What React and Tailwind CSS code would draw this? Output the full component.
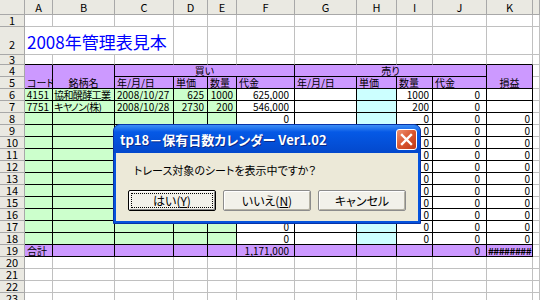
import { Fragment } from "react";

const COLS = ["A", "B", "C", "D", "E", "F", "G", "H", "I", "J", "K", ""];

const rows = [
  { a: "4151", b: "協和醗酵工業", c: "2008/10/27", d: "625", e: "1000", f: "625,000", i: "1000", j: "0", k: "" },
  { a: "7751", b: "キヤノン(株)", c: "2008/10/28", d: "2730", e: "200", f: "546,000", i: "200", j: "0", k: "" },
  ...Array.from({ length: 11 }, () => ({ a: "", b: "", c: "", d: "", e: "", f: "0", i: "0", j: "0", k: "0" })),
];

function Head({ children, className = "items-center" }) {
  return (
    <div className={"flex justify-center bg-[#eae9e2] border-r border-b border-[#a8a8a8] text-[11px] leading-none text-black " + className}>
      {children}
    </div>
  );
}

function Cell({ children, className = "" }) {
  return (
    <div className={"flex items-end whitespace-nowrap border-r border-b text-[10px] leading-[11px] text-black " + className}>
      {children}
    </div>
  );
}

function PlainRow({ n, tableTop }) {
  return (
    <>
      <Head>{n}</Head>
      {COLS.map((c, i) =>
        tableTop && i < 11 ? (
          <Cell key={i} className="border-r-[#c0c0c0] border-b-black" />
        ) : (
          <Cell key={i} className="border-[#c0c0c0]" />
        )
      )}
    </>
  );
}

function XpButton({ children, primary }) {
  if (primary) {
    return (
      <div className="w-[88px] h-[21px] border border-black bg-[#f2f1ea] rounded-[2px] p-[2px] shadow-[inset_1px_1px_0_#fff,inset_-1px_-1px_0_#8a8a8a]">
        <div className="h-full border border-dotted border-black flex items-center justify-center text-[12px] leading-none">
          {children}
        </div>
      </div>
    );
  }
  return (
    <div className="w-[88px] h-[21px] border border-[#8c8c8c] bg-[#f2f1ea] rounded-[2px] flex items-center justify-center text-[12px] leading-none shadow-[inset_1px_1px_0_#fff,inset_-1px_-1px_0_#b5b2a5]">
      {children}
    </div>
  );
}

export default function App() {
  return (
    <div className="relative w-[540px] h-[300px] overflow-hidden bg-white font-['Noto_Sans_CJK_JP',sans-serif] [font-feature-settings:'palt']">
      <div className="grid grid-cols-[25px_28px_62px_59px_34px_29px_58px_62px_40px_36px_54px_46px_7px] grid-rows-[15px_12px_28px_10px_repeat(20,12px)]">
        {/* column headers */}
        <Head />
        {COLS.map((c, i) => (
          <Head key={i}>{c}</Head>
        ))}

        <PlainRow n={1} />

        {/* row 2 with title */}
        <Head className="items-end pb-[4px]">2</Head>
        <Cell className="col-span-3 border-[#c0c0c0] pl-[2px] pb-[3px]">
          <span className="text-[17px] leading-[19px] text-[#0000ff]">2008年管理表見本</span>
        </Cell>
        {COLS.slice(3).map((c, i) => (
          <Cell key={i} className="border-[#c0c0c0]" />
        ))}

        <PlainRow n={3} tableTop />

        {/* row 4 */}
        <Head>4</Head>
        <Cell className="row-span-2 border-black bg-[#cc99ff] pl-[2px]">コード</Cell>
        <Cell className="row-span-2 border-black bg-[#cc99ff] justify-center">銘柄名</Cell>
        <Cell className="col-span-4 border-black bg-[#cc99ff] justify-center">買い</Cell>
        <Cell className="col-span-4 border-black bg-[#cc99ff] justify-center">売り</Cell>
        <Cell className="row-span-2 border-black bg-[#cc99ff] justify-center">損益</Cell>
        <Cell className="border-[#c0c0c0]" />

        {/* row 5 */}
        <Head>5</Head>
        {["年/月/日", "単価", "数量", "代金", "年/月/日", "単価", "数量", "代金"].map((t, i) => (
          <Cell key={i} className="border-black bg-[#cc99ff] pl-[2px]">{t}</Cell>
        ))}
        <Cell className="border-[#c0c0c0]" />

        {/* data rows 6-18 */}
        {rows.map((d, i) => (
          <Fragment key={i}>
            <Head>{i + 6}</Head>
            <Cell className="border-black bg-[#ccffcc] justify-end pr-[3px]">{d.a}</Cell>
            <Cell className="border-black bg-[#ccffcc] pl-[1px] tracking-[-0.6px]">{d.b}</Cell>
            <Cell className="border-black bg-[#ccffcc] pl-[2px]">{d.c}</Cell>
            <Cell className="border-black bg-[#ccffcc] justify-end pr-[3px]">{d.d}</Cell>
            <Cell className="border-black bg-[#ccffcc] justify-end pr-[3px]">{d.e}</Cell>
            <Cell className="border-black justify-end pr-[5px]">{d.f}</Cell>
            <Cell className="border-black" />
            <Cell className="border-black bg-[#ccffff]" />
            <Cell className="border-black justify-end pr-[3px]">{d.i}</Cell>
            <Cell className="border-black justify-end pr-[6px]">{d.j}</Cell>
            <Cell className="border-black justify-end pr-[2px]">{d.k}</Cell>
            <Cell className="border-[#c0c0c0]" />
          </Fragment>
        ))}

        {/* row 19 totals */}
        <Head>19</Head>
        <Cell className="border-black bg-[#cc99ff] pl-[2px]">合計</Cell>
        <Cell className="border-black bg-[#cc99ff]" />
        <Cell className="border-black bg-[#cc99ff]" />
        <Cell className="border-black bg-[#cc99ff]" />
        <Cell className="border-black bg-[#cc99ff]" />
        <Cell className="border-black bg-[#cc99ff] justify-end pr-[5px]">1,171,000</Cell>
        <Cell className="border-black bg-[#cc99ff]" />
        <Cell className="border-black bg-[#cc99ff]" />
        <Cell className="border-black bg-[#cc99ff]" />
        <Cell className="border-black bg-[#cc99ff] justify-end pr-[6px]">0</Cell>
        <Cell className="border-black bg-[#cc99ff] justify-center font-bold tracking-[-0.5px]">########</Cell>
        <Cell className="border-[#c0c0c0]" />

        <PlainRow n={20} />
        <PlainRow n={21} />
        <PlainRow n={22} />
        <PlainRow n={23} />
      </div>

      {/* message box */}
      <div className="absolute left-[113px] top-[124px] w-[308px] h-[100px] flex flex-col rounded-t-[7px] border border-[#0733a8] bg-[#0553dd]">
        <div className="h-[28px] shrink-0 flex items-center justify-between pl-[6px] pr-[3px] rounded-t-[6px] bg-linear-to-b from-[#3d8ef6] via-[#0559e6] via-25% to-[#0348cc]">
          <span className="text-white font-bold text-[13px] leading-none [text-shadow:1px_1px_#0a2a8a]">
            tp18－保有日数カレンダー Ver1.02
          </span>
          <div className="w-[21px] h-[21px] rounded-[3px] border border-white bg-linear-to-br from-[#ee9170] via-[#d9552e] to-[#bf3a18] flex items-center justify-center">
            <svg width="13" height="13" viewBox="0 0 13 13">
              <path d="M2 2L11 11M11 2L2 11" stroke="#fff" strokeWidth="2.4" strokeLinecap="square" />
            </svg>
          </div>
        </div>
        <div className="flex-1 mx-[2px] mb-[2px] bg-[#ece9d8] px-[12px] pt-[10px] flex flex-col">
          <p className="pl-[6px] text-[11px] leading-[14px] text-black">トレース対象のシートを表示中ですか？</p>
          <div className="mt-[13px] flex gap-[7px]">
            <XpButton primary>
              はい(<span className="underline">Y</span>)
            </XpButton>
            <XpButton>
              いいえ(<span className="underline">N</span>)
            </XpButton>
            <XpButton>キャンセル</XpButton>
          </div>
        </div>
      </div>
    </div>
  );
}
